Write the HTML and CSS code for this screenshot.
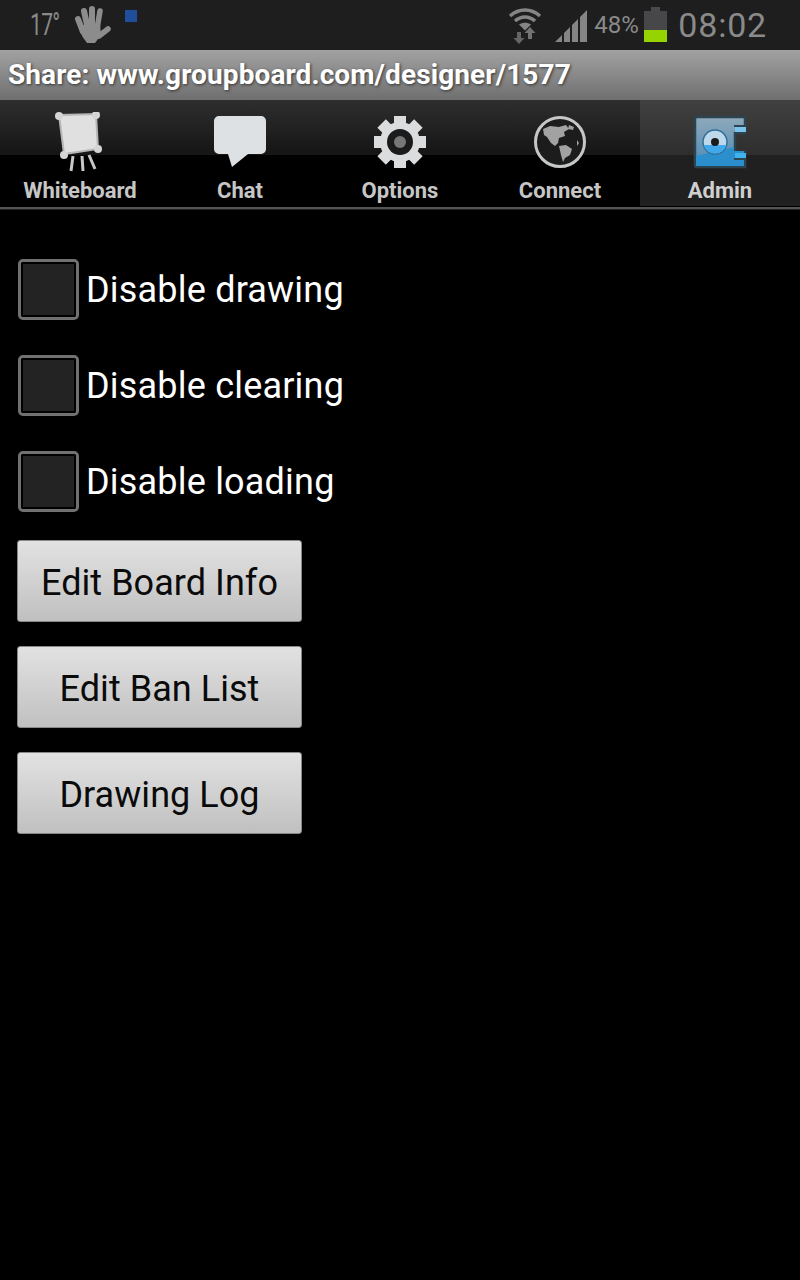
FILE: index.html
```html
<!DOCTYPE html>
<html lang="en">
<head>
<meta charset="utf-8">
<title>Admin</title>
<link rel="stylesheet" href="styles.css">
</head>
<body>
<div class="status">
  <span class="temp">17°</span>
  <svg class="hand" width="38" height="40" viewBox="0 0 38 40"><g fill="none" stroke="#8c8c8c" stroke-linecap="round"><path stroke-width="6" d="M4 14L9 27"/><path stroke-width="6" d="M10 6L14 24"/><path stroke-width="6" d="M18 4L18 24"/><path stroke-width="5.500" d="M26 6L23 24"/><path stroke-width="5.500" d="M34 24L25 31"/></g><path fill="#8c8c8c" d="M8 20L26 19 27 30 21 38 13 38 8 31z"/></svg>
  <span class="blue"></span>
  <span class="spacer"></span>
  <svg class="wifi" width="34" height="38" viewBox="0 0 34 38"><g fill="none" stroke="#858585" stroke-width="3.500"><path d="M2 10C11 2 23 2 32 10"/><path d="M7 15C13 9.500 21 9.500 27 15"/></g><path fill="#858585" d="M11 18.500c3.500-2.500 8.500-2.500 12 0l-6 6z"/><path fill="#727272" d="M22 21l5.500 6H24v6h-4v-6h-3.500z"/><path fill="#666" d="M9 26h4v6h3.500l-5.500 6-5.500-6H9z"/></svg>
  <svg class="signal" width="33" height="34" viewBox="0 0 33 34"><path fill="#858585" d="M0 33L7 26V33zM9 24l6-6V33H9zM17 16l6-6V33h-6zM25 8l7-7V33h-7z"/></svg>
  <span class="pct">48%</span>
  <span class="batt"><span class="batt-cap"></span><span class="batt-body"><span class="batt-fill"></span></span></span>
  <span class="time">08:02</span>
</div>
<div class="title">Share: www.groupboard.com/designer/1577</div>
<nav class="tabs">
  <div class="tab">
    <svg class="ico" width="60" height="60" viewBox="0 0 60 60"><g stroke="#c8c8c8" stroke-width="3" fill="none"><path d="M23 44l-2 15M32 44l1 15M39 43l6 14"/></g><path fill="#e0e0e0" stroke="#b5b5b5" stroke-width="2" d="M9 3L46 2 48 37 14 42z"/><g fill="#d5d5d5"><circle cx="9" cy="4" r="4"/><circle cx="46" cy="3" r="4"/><circle cx="48" cy="37" r="4"/><circle cx="14" cy="43" r="4"/></g></svg>
    <span class="lbl">Whiteboard</span>
  </div>
  <div class="tab">
    <svg class="ico" width="60" height="60" viewBox="0 0 60 60"><path fill="#dde1e3" d="M9 4H51a5 5 0 0 1 5 5V37a5 5 0 0 1-5 5H38L22 55 18 42H9a5 5 0 0 1-5-5V9a5 5 0 0 1 5-5z"/></svg>
    <span class="lbl">Chat</span>
  </div>
  <div class="tab">
    <svg class="ico" width="60" height="60" viewBox="0 0 60 60"><g fill="#dadcdd"><circle cx="30" cy="30" r="20"/><rect x="24" y="4" width="12" height="52"/><rect x="24" y="4" width="12" height="52" transform="rotate(45 30 30)"/><rect x="24" y="4" width="12" height="52" transform="rotate(90 30 30)"/><rect x="24" y="4" width="12" height="52" transform="rotate(135 30 30)"/></g><circle cx="30" cy="30" r="13" fill="#1b1b1b"/><circle cx="30" cy="30" r="6" fill="#777"/></svg>
    <span class="lbl">Options</span>
  </div>
  <div class="tab">
    <svg class="ico" width="60" height="60" viewBox="0 0 60 60"><circle cx="30" cy="30" r="24.500" fill="#1c1c1c" stroke="#c6c8c8" stroke-width="3"/><path fill="#a2a2a2" d="M13 17l7-3 9 1 7-2 3 4-5 3 1 4-6 2-1 5-3 3-4-3-4-6-3-2zM29 34l7-1 6 4-2 6-5 3-2 4-2-7zM39 13l5 2-1 3-5-1zM47 28l2 3-2 3z"/></svg>
    <span class="lbl">Connect</span>
  </div>
  <div class="tab active">
    <svg class="ico" width="60" height="60" viewBox="0 0 60 60"><defs><linearGradient id="g" x1="0" y1="0" x2="0" y2="1"><stop offset="0" stop-color="#8fa9ba"/><stop offset="1" stop-color="#4f8ab5"/></linearGradient></defs><path fill="url(#g)" stroke="#2c444f" stroke-width="2.500" d="M7 5H55V21H45V40H55V55H7a2 2 0 0 1-2-2V7a2 2 0 0 1 2-2z"/><path fill="#2a8fcc" d="M6 44L44 35V39H54V54H6z"/><rect x="45" y="15" width="11" height="5" fill="#78c4ec"/><rect x="45" y="41" width="11" height="5" fill="#3fb2ec"/><rect x="44" y="13" width="12" height="2" fill="#2c444f"/><rect x="44" y="46" width="12" height="2" fill="#2c444f"/><circle cx="25" cy="30" r="12" fill="#bcd8ea" stroke="#2f6f96" stroke-width="1.500"/><path fill="#3fa9ec" d="M13.500 33A12 12 0 0 0 36.500 33z"/><circle cx="25" cy="30" r="4" fill="#1a1a1a"/></svg>
    <span class="lbl">Admin</span>
  </div>
</nav>
<div class="rule"></div>
<main class="content">
  <label class="check"><span class="box"></span>Disable drawing</label>
  <label class="check"><span class="box"></span>Disable clearing</label>
  <label class="check"><span class="box"></span>Disable loading</label>
  <div class="buttons">
    <button class="btn">Edit Board Info</button>
    <button class="btn">Edit Ban List</button>
    <button class="btn">Drawing Log</button>
  </div>
</main>
</body>
</html>
```
FILE: styles.css
```css
* { box-sizing: border-box; }
html, body { margin: 0; padding: 0; }
body { width: 800px; height: 1280px; background: #000; font-family: Roboto, "Liberation Sans", sans-serif; overflow: hidden; }

.status { height: 50px; background: #1e1e1e; display: flex; align-items: flex-start; padding-left: 30px; color: #8a8a8a; }
.temp { font-size: 31px; line-height: 50px; width: 44px; letter-spacing: -1px; transform: scaleX(.68); transform-origin: left; }
.hand { margin-top: 5px; }
.blue { width: 12px; height: 12px; background: #1f4e9c; margin: 10px 0 0 13px; }
.spacer { flex: 1; }
.wifi { margin-top: 6px; }
.signal { margin: 9px 0 0 13px; }
.pct { font-size: 24px; line-height: 50px; width: 45px; margin-left: 6px; white-space: nowrap; }
.batt { width: 23px; margin: 7px 0 0 5px; display: flex; flex-direction: column; align-items: center; }
.batt-cap { width: 9px; height: 4px; background: #4a4a4a; }
.batt-body { width: 23px; height: 31px; background: #47474a; display: flex; flex-direction: column; justify-content: flex-end; }
.batt-fill { height: 12px; background: #95d400; }
.time { font-size: 34px; line-height: 50px; margin: 0 33px 0 11px; letter-spacing: .8px; }

.title { height: 50px; background: linear-gradient(#a1a2a1, #6f6f6f); color: #fff; font-size: 28px; font-weight: 700; line-height: 50px; padding-left: 8px; letter-spacing: .1px; text-shadow: 1px 1px 3px #333; white-space: nowrap; }

.tabs { height: 107px; display: grid; grid-template-columns: repeat(5, 160px); background: linear-gradient(#2e2e2e, #151515 55px, #000 55px); }
.tab { display: flex; flex-direction: column; align-items: center; padding-top: 12px; }
.tab.active { background: linear-gradient(#404040, #2e2e2e 55px, #202020 55px); margin-bottom: 1px; }
.ico { display: block; }
.lbl { font-size: 22px; font-weight: 700; line-height: 24px; margin-top: 7px; color: #c6c6c6; }
.tab.active .lbl { color: #cfcfcf; }
.rule { height: 3px; background: #545454; border-bottom: 1px solid #222; }

.content { padding: 49px 0 0 18px; display: flex; flex-direction: column; gap: 35px; }
.check { display: flex; align-items: center; gap: 7px; height: 61px; color: #fff; font-size: 36px; letter-spacing: .2px; }
.box { width: 61px; height: 61px; background: #232323; border: 3px solid #707070; outline: 2px solid #000; outline-offset: -5px; border-radius: 5px; }
.buttons { display: flex; flex-direction: column; gap: 24px; margin: -7px 0 0 -1px; }
.btn { width: 285px; height: 82px; border: 1px solid #888; border-radius: 3px; background: linear-gradient(#e2e2e2, #c0c0c0); color: #0a0a0a; font: 400 36px Roboto, sans-serif; letter-spacing: .05px; padding: 4px 0 0; }
```
